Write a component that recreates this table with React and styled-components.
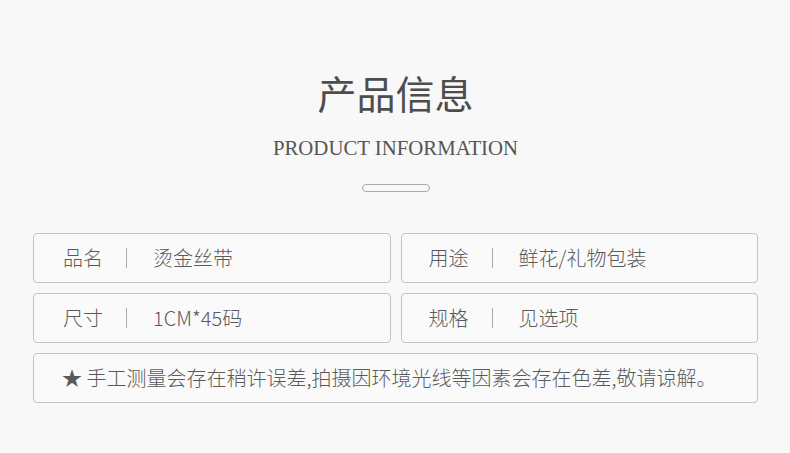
import React from "react";
import styled, { createGlobalStyle } from "styled-components";

const Global = createGlobalStyle`
  html, body { margin: 0; padding: 0; background: #f8f8f8; }
  body { font-family: "Noto Sans CJK SC", "Noto Sans", sans-serif; }
`;

const Page = styled.div`
  width: 790px;
  height: 453px;
  box-sizing: border-box;
  padding: 72px 32px 0 33px;
  display: flex;
  flex-direction: column;
  align-items: center;
`;

const Title = styled.h1`
  margin: 0;
  height: 40px;
  line-height: 40px;
  font-size: 39px;
  font-weight: 400;
  color: #4d4d4d;
  font-family: "Noto Sans CJK SC", sans-serif;
`;

const Subtitle = styled.div`
  margin-top: 24px;
  height: 24px;
  line-height: 24px;
  font-size: 20.8px;
  color: #555;
  font-family: "Liberation Serif", serif;
`;

const Pill = styled.div`
  margin-top: 24px;
  width: 68px;
  height: 8px;
  box-sizing: border-box;
  border: 1.5px solid #aaa;
  border-radius: 4px;
`;

const Grid = styled.div`
  margin-top: 41px;
  width: 725px;
  display: grid;
  grid-template-columns: 1fr 1fr;
  gap: 10px;
`;

const Card = styled.div`
  grid-column: ${(p) => (p.$wide ? "1 / -1" : "auto")};
  height: 50px;
  box-sizing: border-box;
  border: 1px solid #c4c4c4;
  border-radius: 4px;
  background: #fafafa;
  display: flex;
  align-items: center;
  padding-left: ${(p) => p.$pad}px;
  font-size: 20px;
  font-weight: 300;
  color: #5a5a5a;
`;

const Label = styled.span`
  width: 63px;
  line-height: 1;
`;

const Divider = styled.span`
  width: 1px;
  height: 20px;
  background: #aaa;
  margin-right: 26px;
`;

const Value = styled.span`
  line-height: 1;
`;

const Note = styled.span`
  line-height: 1;
  white-space: nowrap;
`;

const items = [
  ["品名", "烫金丝带"],
  ["用途", "鲜花/礼物包装"],
  ["尺寸", "1CM*45码"],
  ["规格", "见选项"],
];

export default function App() {
  return (
    <>
      <Global />
      <Page>
        <Title>产品信息</Title>
        <Subtitle>PRODUCT INFORMATION</Subtitle>
        <Pill />
        <Grid>
          {items.map(([k, v], i) => (
            <Card key={k} $pad={i % 2 ? 27 : 29}>
              <Label>{k}</Label>
              <Divider />
              <Value>{v}</Value>
            </Card>
          ))}
          <Card $wide $pad={28}>
            <Note>★ 手工测量会存在稍许误差,拍摄因环境光线等因素会存在色差,敬请谅解。</Note>
          </Card>
        </Grid>
      </Page>
    </>
  );
}
